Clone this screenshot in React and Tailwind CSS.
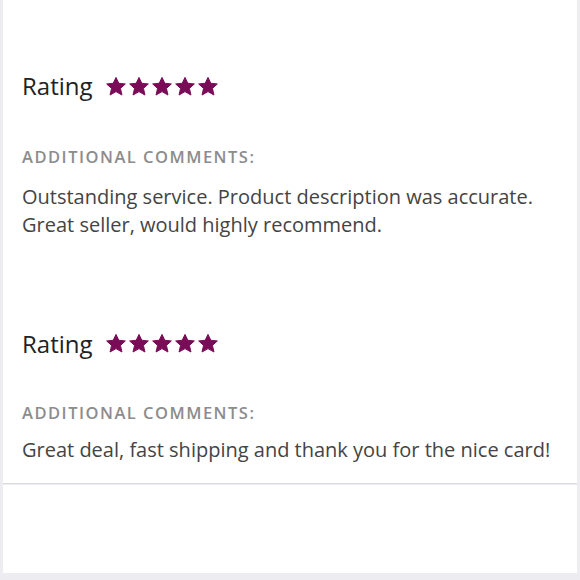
import React from "react";

function Star() {
  return (
    <svg width="20" height="19" viewBox="0 0 24 23" className="shrink-0">
      <polygon
        points="12,0.5 15.4,7.6 23.3,8.4 17.4,13.8 19.2,21.8 12,17.7 4.8,21.8 6.6,13.8 0.7,8.4 8.6,7.6"
        fill="#7a0b57"
        stroke="#7a0b57"
        strokeWidth="1.2"
        strokeLinejoin="round"
      />
    </svg>
  );
}

function Review({ text, pt, ratingGap, commentGap }) {
  return (
    <div className={pt}>
      <div className="flex items-center gap-[13px]">
        <span className="text-[24px] leading-none text-[#222]">Rating</span>
        <div className="flex items-center gap-[3px]">
          <Star />
          <Star />
          <Star />
          <Star />
          <Star />
        </div>
      </div>
      <div className={`${ratingGap} text-[16.5px] leading-none tracking-[1.5px] text-[#8c8c8c] font-semibold`}>
        ADDITIONAL COMMENTS:
      </div>
      <p className={`${commentGap} text-[20px] leading-[28px] text-[#444]`}>{text}</p>
    </div>
  );
}

export default function App() {
  return (
    <div
      className="w-[580px] h-[580px] bg-[#ececf1] pl-[3px] pr-[3px] flex flex-col"
      style={{ fontFamily: "'Open Sans', sans-serif" }}
    >
      <div className="bg-white h-[484px] px-[19px] border-b border-[#dcdce0]">
        <Review
          pt="pt-[74px]"
          ratingGap="mt-[51px]"
          commentGap="mt-[17px]"
          text="Outstanding service. Product description was accurate. Great seller, would highly recommend."
        />
        <Review
          pt="pt-[93px]"
          ratingGap="mt-[49px]"
          commentGap="mt-[15px]"
          text="Great deal, fast shipping and thank you for the nice card!"
        />
      </div>
      <div className="bg-white h-[88px] mt-[1px]" />
    </div>
  );
}
